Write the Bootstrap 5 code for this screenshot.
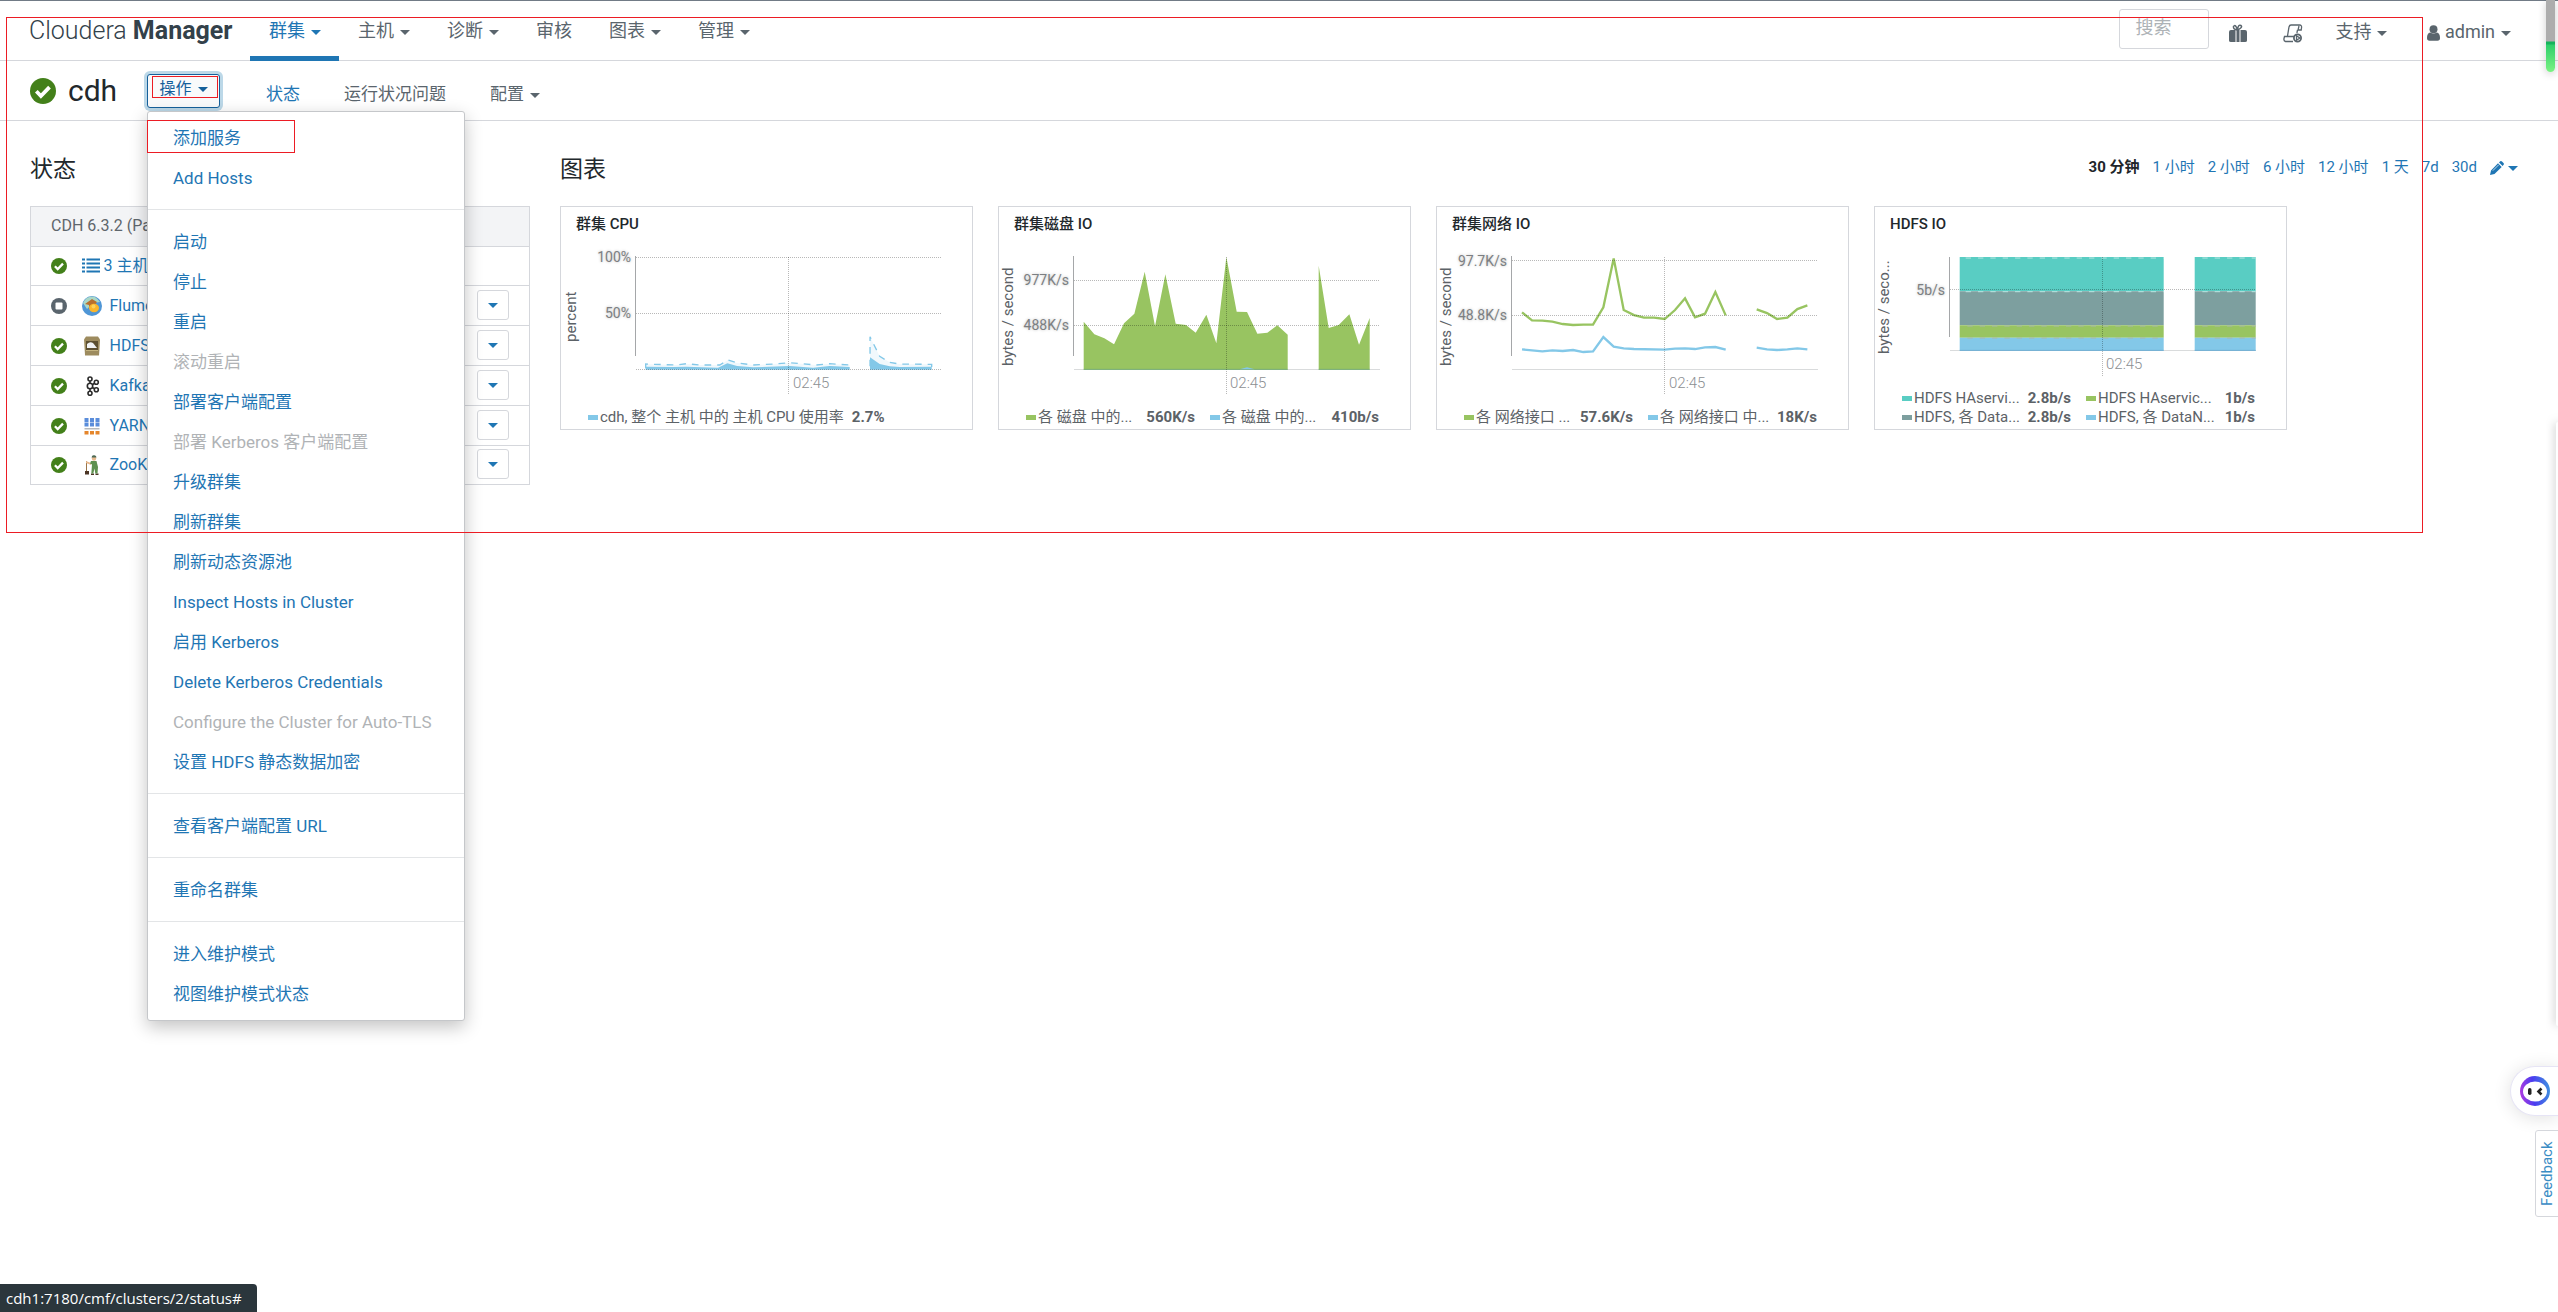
<!DOCTYPE html>
<html lang="zh-CN">
<head>
<meta charset="utf-8">
<meta name="viewport" content="width=device-width, initial-scale=1">
<title>cdh - Cloudera Manager</title>
<link href="https://cdn.jsdelivr.net/npm/bootstrap@5.3.0/dist/css/bootstrap.min.css" rel="stylesheet">
<style>
:root{--cm-blue:#1f76b4;--cm-gray:#5a656d;--cm-line:#d5d7dc;--cm-red:#ec1c24}
body{font-family:Roboto,"Noto Sans CJK SC",sans-serif;font-size:18px;line-height:24px;color:#22282c;background:#fff;overflow:hidden;min-height:100vh;position:relative}
a{color:var(--cm-blue);text-decoration:none}
.caret{display:inline-block;border:5px solid transparent;border-top-color:currentColor;border-bottom:0;vertical-align:middle;margin-left:6px}
.topbar{border-top:1px solid #717b86;border-bottom:1px solid var(--cm-line);height:61px;padding:0 47px 0 29px}
.brand{font-size:25px;line-height:36px;color:#33414a;font-weight:300;width:221px;padding-top:12px}
.brand b{font-weight:700}
.mainnav a{padding:18px 18px 13px 19px;height:60px;color:var(--cm-gray);border-bottom:5px solid transparent;white-space:nowrap}
.mainnav a.active{color:var(--cm-blue);border-bottom-color:var(--cm-blue)}
.tools{color:var(--cm-gray);padding-top:8px}
.tools a{color:var(--cm-gray);line-height:46px;white-space:nowrap}
.tools .runcmd{margin-left:36px}
.searchbox{width:90px;height:40px;border:1px solid var(--cm-line);border-radius:3px;padding:0 0 4px 15px;font-size:18px;color:#333}
.searchbox::placeholder{color:#adb2b6}
.subbar{border-bottom:1px solid var(--cm-line);height:60px;padding-left:30px}
.cname{font-size:30px;line-height:36px;font-weight:400;margin:0 0 0 12px;width:79px}
.actbtn{font-size:16px;line-height:22px;height:34px;width:73px;color:#15609b;border:1px solid #15609b;border-radius:3px;box-shadow:0 0 0 3px #bcd8e8;background:#f9fafb;padding:0 0 3px 0}
.subnav{padding:7px 0 0 46px;gap:44px;font-size:17px}
.subnav a{color:var(--cm-gray)}
.subnav a.active{color:var(--cm-blue)}
.actmenu{top:111px;left:147px;width:318px;border:1px solid #c5c7ca;border-radius:3px;padding:6px 0;box-shadow:0 6px 18px rgba(0,0,0,.24);font-size:17px;background:#fff;z-index:20;white-space:nowrap}
.actmenu a{display:block;padding:8px 25px;line-height:24px;color:var(--cm-blue)}
.actmenu a.off{color:#b0b3b6}
.actmenu hr{margin:11px 0 12px;border:0;border-top:1px solid #e3e5e7;opacity:1}
.pagebody{padding:32px 40px 0 30px;gap:30px}
.leftcol{width:500px;flex:none}
h2.sect{font-size:23px;line-height:34px;font-weight:400;margin:0}
.svc{width:100%;margin-top:19px;border:1px solid var(--cm-line);font-size:16px;border-collapse:collapse}
.svc td,.svc th{height:40px;padding:0;border-bottom:1px solid var(--cm-line);line-height:24px;vertical-align:middle;font-weight:400}
.svc tr.hostrow td,.svc tr:last-child td{height:39px}
.svc tr.hostrow td{padding-bottom:1px}
.svc th{background:#f3f4f6;color:#5f666c;padding:0 0 1px 20px}
.svc svg{display:block}
.stcell{width:51px;padding-left:20px!important}
.rowbtn{width:32px;height:30px;border:1px solid var(--cm-line);border-radius:3px;background:#fff;color:var(--cm-blue);padding:0;line-height:12px;display:block;margin:0 20px 2px auto}
.rowbtn .caret{margin:0}
.ranges{font-size:15px;line-height:24px;gap:13px;padding-top:2px}
.charts{gap:25px;margin-top:19px}
.panel{flex:0 1 413px;border:1px solid var(--cm-line);background:#fff;color:#5c6267}
.panel h3{font-size:15px;line-height:20px;font-weight:500;color:#22282c;margin:0;padding:7px 15px}
.panel svg{display:block;width:100%}
.panel svg text{font-size:15px;fill:#5c6267}
.panel svg .tick{font-size:14px;text-anchor:end;fill:#7c7f82;text-shadow:0 0 3px #bbb}
.panel svg .hour{fill:#8d9093;font-weight:300}
.axis{stroke:#a5a7a9;stroke-width:1}
.grid{stroke:#000;stroke-opacity:.28;stroke-dasharray:1 1}
.base{stroke:#d9dbdc}
.legend{display:grid;grid-template-columns:1fr 1fr;column-gap:15px;font-size:15px;line-height:19px;padding:12px 31px 2px 27px;white-space:nowrap}
.legend.one{grid-template-columns:1fr}
.lg{display:flex;align-items:center;height:19px}
.lg i{width:10px;height:5px;margin-right:2px;flex:none}
.lg b{margin-left:auto;font-weight:700}
.legend.one b{margin-left:8px}
.c-bl{background:#83c8e8;fill:#83c8e8}.c-gr{background:#98c461;fill:#98c461}.c-te{background:#59cdc3;fill:#59cdc3}.c-gy{background:#7d9f9f;fill:#7d9f9f}
.note{position:absolute;border:1px solid var(--cm-red);z-index:30;pointer-events:none}
.note-page{left:6px;top:17px;width:2417px;height:516px}
.note-btn{left:152px;top:76px;width:66px;height:22px}
.note-item{left:147px;top:120px;width:148px;height:33px}
.sidethumb{position:absolute;right:3px;top:0;width:9px;height:72px;border-radius:0 0 5px 5px;background:linear-gradient(#adadad 0 41px,#14b35c 42px 44px,#2fcf6b 45px,#7bf283 72px);box-shadow:0 2px 8px rgba(0,0,0,.2)}
.sideedge{position:absolute;right:0;top:422px;width:2px;height:604px;background:#fff;border-radius:2px 0 0 2px;box-shadow:0 0 8px rgba(0,0,0,.5)}
.bot{position:absolute;right:0;top:1066px;width:48px;height:50px;border:1px solid #e6e4f5;border-right:0;border-radius:25px 0 0 25px;background:#fff;box-shadow:0 2px 18px rgba(0,0,0,.12);padding:0 0 0 9px}
.fb{position:absolute;right:-1px;top:1130px;width:24px;height:87px;border:1px solid var(--cm-line);border-radius:0 3px 3px 0;background:#fff;font-size:15px;line-height:20px;writing-mode:vertical-rl;transform:rotate(180deg);text-align:center;color:#3a8cc4}
.urltip{position:absolute;left:0;bottom:0;height:28px;width:257px;background:#2b363c;color:#fff;border-radius:0 4px 0 0;font-family:"Open Sans","Noto Sans",sans-serif;font-size:15px;line-height:29px;padding-left:6px;white-space:nowrap}
</style>
</head>
<body>
<svg width="0" height="0" class="position-absolute" aria-hidden="true">
<symbol id="ok" viewBox="0 0 16 16"><circle cx="8" cy="8" r="8" fill="#43801a"/><path d="M3.9 8.2l2.8 2.9 5.3-5.5" fill="none" stroke="#fff" stroke-width="2.3"/></symbol>
</svg>

<header class="topbar d-flex">
  <div class="brand">Cloudera <b>Manager</b></div>
  <nav class="mainnav d-flex">
    <a class="active" href="#">群集<span class="caret"></span></a>
    <a href="#">主机<span class="caret"></span></a>
    <a href="#">诊断<span class="caret"></span></a>
    <a href="#">审核</a>
    <a href="#">图表<span class="caret"></span></a>
    <a href="#">管理<span class="caret"></span></a>
  </nav>
  <div class="tools ms-auto d-flex align-items-start">
    <input class="searchbox" type="text" placeholder="搜索" aria-label="搜索">
    <a href="#" class="ms-3 ps-1" aria-label="新增功能"><svg width="18" height="19" viewBox="0 0 18 19"><path d="M0 8q0-2 2-2h4.500v12H2q-2 0-2-1.500zM7.500 6h3v12h-3zM11.500 6H16q2 0 2 2v8.500q0 1.500-2 1.500h-4.500z" fill="#5a656d"/><path d="M8.500 6Q4 5.500 4.500 2.500 6.500-.5 8.500 6Q9 0 12 1.500q2 2-3.500 4.500" fill="none" stroke="#5a656d" stroke-width="1.500"/></svg></a>
    <a href="#" class="runcmd" aria-label="运行命令"><svg width="20" height="19" viewBox="0 0 20 19" fill="none" stroke="#5a656d" stroke-width="1.300"><path d="M4.500 12L6 3q.5-2 2-2h8.500q2.500 0 2 3l-.3 2H15l1-4M14.500 6l-.6 3M10 17.500H2.500Q.5 17 1 14.500l.5-2H11"/><circle cx="14.500" cy="14" r="3.600" stroke-width="1.800"/><path d="M13.500 11.800l3.300 2.200-3.300 2.200z" fill="#fff"/></svg></a>
    <a href="#" class="ms-4 ps-2">支持<span class="caret"></span></a>
    <a href="#" class="ms-4 ps-3"><svg width="13" height="16" viewBox="0 0 13 16" fill="#5a656d"><circle cx="6.500" cy="4.200" r="4"/><path d="M0 13q0-5 3.200-5.500 3.300 2 6.600 0Q13 8 13 13q0 2.800-2.500 2.800h-8Q0 15.800 0 13z"/></svg> admin<span class="caret"></span></a>
  </div>
</header>

<div class="subbar d-flex align-items-center">
  <svg width="26" height="26" aria-label="运行状况良好" class="flex-shrink-0"><use href="#ok"/></svg>
  <h1 class="cname">cdh</h1>
  <button class="actbtn" type="button" aria-expanded="true">操作<span class="caret"></span></button>
  <nav class="subnav d-flex">
    <a class="active" href="#">状态</a><a href="#">运行状况问题</a><a href="#">配置<span class="caret"></span></a>
  </nav>
</div>

<div class="actmenu position-absolute">
  <a href="#">添加服务</a>
  <a href="#">Add Hosts</a>
  <hr>
  <a href="#">启动</a>
  <a href="#">停止</a>
  <a href="#">重启</a>
  <a href="#" class="off">滚动重启</a>
  <a href="#">部署客户端配置</a>
  <a href="#" class="off">部署 Kerberos 客户端配置</a>
  <a href="#">升级群集</a>
  <a href="#">刷新群集</a>
  <a href="#">刷新动态资源池</a>
  <a href="#">Inspect Hosts in Cluster</a>
  <a href="#">启用 Kerberos</a>
  <a href="#">Delete Kerberos Credentials</a>
  <a href="#" class="off">Configure the Cluster for Auto-TLS</a>
  <a href="#">设置 HDFS 静态数据加密</a>
  <hr>
  <a href="#">查看客户端配置 URL</a>
  <hr>
  <a href="#">重命名群集</a>
  <hr>
  <a href="#">进入维护模式</a>
  <a href="#">视图维护模式状态</a>
</div>

<main class="pagebody d-flex">
  <section class="leftcol">
    <h2 class="sect">状态</h2>
    <table class="svc">
      <thead><tr><th colspan="3">CDH 6.3.2 (Parcel)</th></tr></thead>
      <tbody>
      <tr class="hostrow"><td class="stcell"><svg width="16" height="16"><use href="#ok"/></svg></td>
        <td colspan="2"><a href="#" class="d-flex align-items-center gap-1"><svg width="18" height="15" viewBox="0 0 18 15" stroke="#1f76b4" stroke-width="2"><path d="M0 1.500h3M4.500 1.500H18M0 5.500h3M4.500 5.500H18M0 9.500h3M4.500 9.500H18M0 13.500h3M4.500 13.500H18"/></svg>3 主机</a></td></tr>
      <tr><td class="stcell"><svg width="16" height="16" viewBox="0 0 16 16"><circle cx="8" cy="8" r="8" fill="#5a656d"/><rect x="4.500" y="4.500" width="7" height="7" rx="1" fill="#fff"/></svg></td>
        <td><a href="#" class="d-flex align-items-center gap-2"><svg width="20" height="20" viewBox="0 0 20 20"><circle cx="10" cy="10" r="10" fill="#4f96d6"/><path d="M1 7Q5-1 13 1q3 2 5 5l-7 1-6 6z" fill="#a9d7c7"/><path d="M3 8l7-5 5 3-3 4-5 3 0-4z" fill="#b8702e"/><ellipse cx="12" cy="12" rx="5" ry="4.200" fill="#fbb62b"/><circle cx="11.500" cy="10.500" r="2" fill="#fdd25c"/></svg>Flume</a></td>
        <td><button class="rowbtn" type="button" aria-label="Flume 操作"><span class="caret"></span></button></td></tr>
      <tr><td class="stcell"><svg width="16" height="16"><use href="#ok"/></svg></td>
        <td><a href="#" class="d-flex align-items-center gap-2"><svg width="20" height="20" viewBox="0 0 20 20"><path d="M4 .5h12l2 3-1 16H3l-1-16z" fill="#9d8b5e"/><path d="M4 5h12v9H4z" fill="#5c4f31"/><path d="M5 12V8q3-3 6-1l4 5z" fill="#f1f2f4"/><path d="M4 14h12v1H4z" fill="#c4b37f"/></svg>HDFS</a></td>
        <td><button class="rowbtn" type="button" aria-label="HDFS 操作"><span class="caret"></span></button></td></tr>
      <tr><td class="stcell"><svg width="16" height="16"><use href="#ok"/></svg></td>
        <td><a href="#" class="d-flex align-items-center gap-2"><svg width="20" height="20" viewBox="0 0 20 20" fill="none" stroke="#2b2b2b" stroke-width="1.600"><circle cx="8" cy="3" r="2"/><circle cx="8" cy="10" r="2.700"/><circle cx="8" cy="17.200" r="2"/><circle cx="14.300" cy="6.300" r="2"/><circle cx="14.300" cy="13.800" r="2"/><path d="M8 5v2.500M8 12.700v2.500M10.300 8.700l2.300-1.400M10.300 11.400l2.300 1.400"/></svg>Kafka</a></td>
        <td><button class="rowbtn" type="button" aria-label="Kafka 操作"><span class="caret"></span></button></td></tr>
      <tr><td class="stcell"><svg width="16" height="16"><use href="#ok"/></svg></td>
        <td><a href="#" class="d-flex align-items-center gap-2"><svg width="20" height="20" viewBox="0 0 20 20"><path d="M2.500 2h4v4h-4zM8 2h4v4H8zM13.500 2h4v4h-4zM2.500 6.500h4v4h-4zM8 6.500h4v4H8zM13.500 6.500h4v4h-4z" fill="#5a8ddb"/><path d="M2.500 12h15v1.500h-15z" fill="#b5b8bc"/><path d="M2.500 15h4v3.500h-4zM8 15h4v3.500H8zM13.500 15h4v3.500h-4z" fill="#e5862c"/></svg>YARN</a></td>
        <td><button class="rowbtn" type="button" aria-label="YARN 操作"><span class="caret"></span></button></td></tr>
      <tr><td class="stcell"><svg width="16" height="16"><use href="#ok"/></svg></td>
        <td><a href="#" class="d-flex align-items-center gap-2"><svg width="20" height="20" viewBox="0 0 20 20"><path d="M4.500 6v12" stroke="#9a7448"/><path d="M3 16h4v3.500H3zM9 18.500h3V20H9zM13.500 18.500h3V20h-3z" fill="#4b3526"/><path d="M4 6l5 2v2L4 8z" fill="#e8b98e"/><path d="M9 6h5.500l1.500 6-.5 6.500h-2.200l-.8-5-1.200 5H9.300l.7-9-2-1z" fill="#5e9150"/><circle cx="12" cy="3.500" r="2.200" fill="#e8b98e"/><path d="M9.500 2.500Q10-.5 12.500.3q2 .4 2 2.200z" fill="#4d6a55"/></svg>ZooKeeper</a></td>
        <td><button class="rowbtn" type="button" aria-label="ZooKeeper 操作"><span class="caret"></span></button></td></tr>
      </tbody>
    </table>
  </section>

  <section class="flex-grow-1">
    <div class="d-flex justify-content-between">
      <h2 class="sect">图表</h2>
      <nav class="ranges d-flex">
        <b class="text-dark">30 分钟</b><a href="#">1 小时</a><a href="#">2 小时</a><a href="#">6 小时</a><a href="#">12 小时</a><a href="#">1 天</a><a href="#">7d</a><a href="#">30d</a>
        <a href="#" aria-label="编辑"><svg width="14" height="14" viewBox="0 0 14 14" fill="#1f76b4"><path d="M0 14l1-4.500L8 2.300l3.700 3.700-7.200 7zM9 1.400L10.200.3q1-.6 1.800.2l1.500 1.500q.8.900.1 1.800L12.600 5z"/><path d="M2.800 9.700l6-6" stroke="#fff" stroke-width=".7"/></svg><span class="caret ms-1"></span></a>
      </nav>
    </div>
    <div class="charts d-flex flex-wrap">
      <article class="panel">
        <h3>群集 CPU</h3>
        <svg viewBox="1 35 411 155" height="155">
          <g transform="translate(-20.300 -16.300) scale(.33333)">
            <path fill="#f1f8fc" d="M318 540V523L410 526 440 522 480 526 540 526 565 511 590 519 640 526 700 523 750 519 830 526 870 522 930 526V540zM991 540V441L1020 500 1050 518 1080 523 1176 524V540z"/>
            <path fill="#83c8e8" d="M318 540V531L400 532 440 531 535 534 563 521 592 529 640 533 750 529 820 534 870 529 930 532V540zM991 540V503L1020 523 1050 530 1080 532 1176 531V540z"/>
            <path fill="none" stroke="#83c8e8" stroke-width="4" stroke-dasharray="20 18" d="M318 536V523L410 526 440 522 480 526 540 526 565 511 590 519 640 526 700 523 750 519 830 526 870 522 930 526M991 530V441L1020 500 1050 518 1080 523 1176 524V536"/>
          </g>
          <path class="grid" d="M76 51.500H382M76 107.500H382M76 163.500H382M228.500 51V189"/>
          <path class="axis" d="M75.500 50V150"/>
          <text class="tick" x="71" y="56">100%</text><text class="tick" x="71" y="112">50%</text>
          <text class="hour" x="233" y="182">02:45</text>
          <text transform="translate(16 136) rotate(-90)">percent</text>
        </svg>
        <div class="legend one"><div class="lg"><i class="c-bl"></i>cdh, 整个 主机 中的 主机 CPU 使用率<b>2.7%</b></div></div>
      </article>
      <article class="panel">
        <h3>群集磁盘 IO</h3>
        <svg viewBox="1 35 411 155" height="155">
          <path class="base" d="M76 163.500H382"/>
          <g transform="translate(-18.300 -16.300) scale(.33333)">
            <path fill="#98c461" d="M312 540V396L344 434 374 446 403 464 433 401 464 372 495 246 526 410 557 254 588 402 619 406 648 429 680 375 710 461 740 202 771 366 802 367 833 432 863 429 893 407 924 435V540zM1017 540V228L1047 415 1077 406 1109 374 1138 465 1170 385V540z"/>
            <path fill="none" stroke="#5f9f7a" stroke-width="2" d="M312 539H924M1017 539H1170"/><path fill="#83c8e8" d="M780 539L802 533 825 539z"/>
          </g>
          <path class="grid" d="M76 74.500H382M76 119.500H382M228.500 51V189"/>
          <path class="axis" d="M75.500 50V150"/>
          <text class="tick" x="71" y="79">977K/s</text><text class="tick" x="71" y="124">488K/s</text>
          <text class="hour" x="232" y="182">02:45</text>
          <text transform="translate(15 160) rotate(-90)">bytes / second</text>
        </svg>
        <div class="legend"><div class="lg"><i class="c-gr"></i>各 磁盘 中的...<b>560K/s</b></div><div class="lg"><i class="c-bl"></i>各 磁盘 中的...<b>410b/s</b></div></div>
      </article>
      <article class="panel">
        <h3>群集网络 IO</h3>
        <svg viewBox="1 35 411 155" height="155">
          <path class="base" d="M76 163.500H382"/>
          <g transform="translate(-15.300 -16.300) scale(.33333)" fill="none" stroke-width="7">
            <path stroke="#98c461" d="M304 368L334 392 365 393 395 396 426 403 457 406 488 405 517 405 548 353 579 206 609 361 640 376 670 384 700 384 732 388 763 361 793 326 823 383 853 372 884 307 915 377M1008 359L1039 370 1069 388 1100 384 1130 358 1160 347"/>
            <path stroke="#83c8e8" d="M304 479L334 482 365 485 395 482 426 484 457 481 488 487 517 485 548 442 579 471 609 476 640 478 732 480 763 477 793 476 823 478 853 473 884 472 915 480M1008 474L1039 479 1069 481 1100 479 1130 476 1160 479"/>
          </g>
          <path class="grid" d="M76 54.500H382M76 109.500H382M228.500 51V189"/>
          <path class="axis" d="M75.500 50V150"/>
          <text class="tick" x="71" y="60">97.7K/s</text><text class="tick" x="71" y="114">48.8K/s</text>
          <text class="hour" x="233" y="182">02:45</text>
          <text transform="translate(15 160) rotate(-90)">bytes / second</text>
        </svg>
        <div class="legend"><div class="lg"><i class="c-gr"></i>各 网络接口 ...<b>57.6K/s</b></div><div class="lg"><i class="c-bl"></i>各 网络接口 中...<b>18K/s</b></div></div>
      </article>
      <article class="panel">
        <h3>HDFS IO</h3>
        <svg viewBox="1 35 411 136" height="136">
          <path class="base" d="M76 144.500H382"/>
          <g transform="translate(-23.300 -16.300) scale(.33333)">
            <path class="c-te" d="M327 202H939V305H327zM1032 202H1215V305H1032z"/>
            <path class="c-gy" d="M327 305H939V407H327zM1032 305H1215V407H1032z"/>
            <path class="c-gr" d="M327 407H939V444H327zM1032 407H1215V444H1032z"/>
            <path class="c-bl" d="M327 444H939V483H327zM1032 444H1215V483H1032z"/>
            <path fill="none" stroke="#b5e8e3" stroke-width="3" stroke-dasharray="16 21" d="M345 205H939M1055 205H1215M345 306H939M1055 306H1215"/>
            <path fill="none" stroke="#a9b9a9" stroke-width="3" stroke-dasharray="16 21" d="M350 409H939M1055 409H1215M350 445H939M1055 445H1215"/>
            <path stroke="#5f9fc5" stroke-width="2" d="M327 482H939M1032 482H1215"/>
          </g>
          <path class="grid" d="M76 83.500H382M228.500 51V170"/>
          <path class="axis" d="M75.500 51V131"/>
          <text class="tick" x="71" y="89">5b/s</text>
          <text class="hour" x="232" y="163">02:45</text>
          <text transform="translate(15 148) rotate(-90)">bytes / seco...</text>
        </svg>
        <div class="legend"><div class="lg"><i class="c-te"></i>HDFS HAservi...<b>2.8b/s</b></div><div class="lg"><i class="c-gr"></i>HDFS HAservic...<b>1b/s</b></div><div class="lg"><i class="c-gy"></i>HDFS, 各 Data...<b>2.8b/s</b></div><div class="lg"><i class="c-bl"></i>HDFS, 各 DataN...<b>1b/s</b></div></div>
      </article>
    </div>
  </section>
</main>

<div class="note note-page"></div>
<div class="note note-btn"></div>
<div class="note note-item"></div>
<div class="sidethumb"></div>
<div class="sideedge"></div>
<button class="bot" type="button" aria-label="助手"><svg class="d-block" width="30" height="30" viewBox="0 0 30 30"><defs><linearGradient id="ring" x1="0" y1=".6" x2="1" y2=".5"><stop offset="0" stop-color="#b03be0"/><stop offset=".45" stop-color="#4a3cf0"/><stop offset="1" stop-color="#3f8fe0"/></linearGradient></defs><circle cx="15" cy="15" r="15" fill="url(#ring)"/><ellipse cx="15" cy="15.500" rx="12" ry="10" fill="#fff"/><rect x="8" y="12" width="3.500" height="7" rx="1.700" fill="#222"/><path d="M21.500 12.500l-3 3 3 3" fill="none" stroke="#222" stroke-width="2.600"/></svg></button>
<button class="fb p-0" type="button">Feedback</button>
<div class="urltip">cdh1:7180/cmf/clusters/2/status#</div>
<script src="https://cdn.jsdelivr.net/npm/bootstrap@5.3.0/dist/js/bootstrap.bundle.min.js"></script>
</body>
</html>
